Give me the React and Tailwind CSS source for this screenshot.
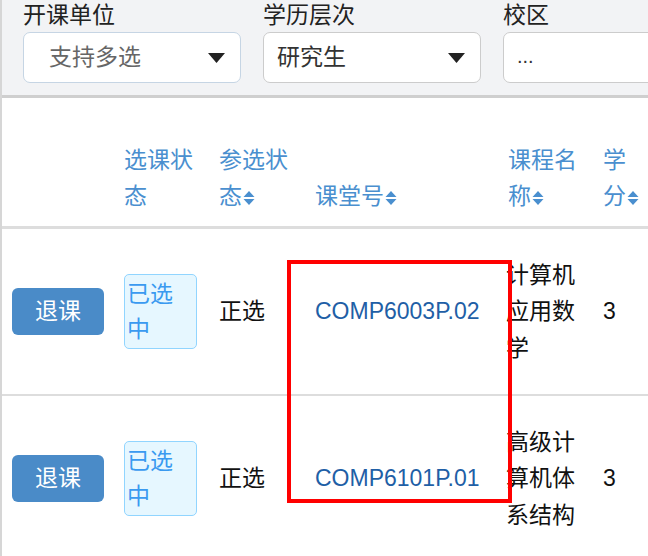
import React from "react";

const SortIcon = () => (
  <svg
    width="12"
    height="16"
    viewBox="0 0 12 16"
    className="inline-block align-[-2px] ml-[1px]"
    fill="#4a8fcf"
  >
    <path d="M6 1 L11.5 7 L0.5 7 Z" />
    <path d="M0.5 9 L11.5 9 L6 15 Z" />
  </svg>
);

const Caret = () => (
  <svg width="17" height="10" viewBox="0 0 17 10" fill="#222">
    <path d="M0 0 L17 0 L8.5 10 Z" />
  </svg>
);

// header text where the last char keeps the sort arrows with it
const Sortable = ({ head, tail }) => (
  <>
    {head}
    <span className="whitespace-nowrap">
      {tail}
      <SortIcon />
    </span>
  </>
);

const filters = [
  { label: "开课单位", value: "支持多选", placeholder: true, caret: true },
  { label: "学历层次", value: "研究生", caret: true },
  { label: "校区", value: "...", caret: false },
];

const rows = [
  { code: "COMP6003P.02", name: "计算机应用数学", credit: "3" },
  { code: "COMP6101P.01", name: "高级计算机体系结构", credit: "3" },
];

const cols = "grid grid-cols-[122px_95px_96px_193px_95px_1fr]";

export default function App() {
  return (
    <div className="relative w-[648px] h-[556px] overflow-hidden bg-white border-l-2 border-[#d6d6d6] font-['Liberation_Sans','Noto_Sans_CJK_SC',sans-serif] text-[23px]">
      {/* filter panel */}
      <div className="h-[98px] bg-[#f2f3f5] border-b-[3px] border-[#cfcfcf] flex gap-[22px] pl-[21px]">
        {filters.map((f) => (
          <div key={f.label} className="w-[218px] shrink-0 flex flex-col">
            <div className="h-[32px] leading-[30px] text-[#222]">{f.label}</div>
            <div
              className={
                "h-[51px] bg-white rounded-[7px] border-[1.5px] flex items-center justify-between pr-[15px] " +
                (f.placeholder
                  ? "border-[#c6d5e4] pl-[25px] text-[#666]"
                  : "border-[#cccccc] pl-[13px] text-[#333]")
              }
            >
              <span className={f.value === "..." ? "text-[20px] pb-[4px]" : ""}>
                {f.value}
              </span>
              {f.caret && <Caret />}
            </div>
          </div>
        ))}
      </div>

      {/* table header */}
      <div
        className={
          cols +
          " h-[131px] border-b-[3px] border-[#dddddd] items-end pb-[12px] text-[#4a8fcf] leading-[36px]"
        }
      >
        <div />
        <div className="w-[72px]">选课状态</div>
        <div className="w-[72px]">
          <Sortable head="参选状" tail="态" />
        </div>
        <div>
          <Sortable head="课堂" tail="号" />
        </div>
        <div className="w-[72px]">
          <Sortable head="课程名" tail="称" />
        </div>
        <div className="w-[40px]">
          <Sortable head="学" tail="分" />
        </div>
      </div>

      {/* rows */}
      {rows.map((r) => (
        <div
          key={r.code}
          className={cols + " h-[167px] border-b-2 border-[#dddddd] items-center"}
        >
          <div className="pl-[10px]">
            <button className="w-[92px] h-[47px] bg-[#4a8bc8] rounded-[6px] text-white">
              退课
            </button>
          </div>
          <div>
            <div className="w-[73px] h-[75px] border-[1.5px] border-[#91d5ff] bg-[#e6f7ff] rounded-[5px] text-[#3a9af0] leading-[35px] px-[2px] pt-[2px]">
              已选中
            </div>
          </div>
          <div className="text-[#111]">正选</div>
          <div className="text-[#1f5fa6]">{r.code}</div>
          <div className="w-[72px] -ml-[2px] leading-[36.5px] text-[#111]">{r.name}</div>
          <div className="text-[#111]">{r.credit}</div>
        </div>
      ))}

      {/* highlight */}
      <div className="absolute left-[285px] top-[260px] w-[225px] h-[243px] border-4 border-[#ff0000]" />
    </div>
  );
}
